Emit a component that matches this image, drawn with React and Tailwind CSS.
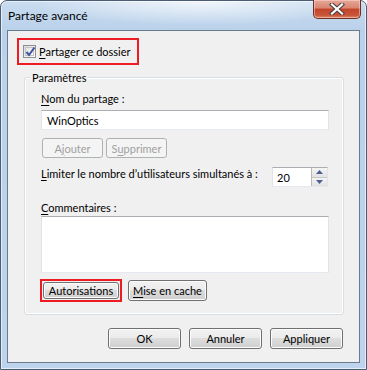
import { useState } from "react";

const btn =
  "flex items-center justify-center rounded-[3px] border border-[#707070] bg-[linear-gradient(#f2f2f2_0%,#ebebeb_45%,#dddddd_50%,#cfcfcf_100%)] shadow-[inset_0_0_0_1px_#fcfcfc] text-black";
const btnDisabled =
  "flex items-center justify-center rounded-[3px] border border-[#adb2b5] bg-[#f4f4f4] text-[#a0a0a0]";
const field = "border border-[#e2e3ea] border-t-[#abadb3] border-b-[#e3e9ef] bg-white";

function U({ children }) {
  return <span className="underline underline-offset-[2px]">{children}</span>;
}

function CheckBox({ checked, onClick }) {
  return (
    <div
      onClick={onClick}
      className="shrink-0 w-[13px] h-[13px] border border-[#8e8f8f] bg-[linear-gradient(135deg,#dcdcdc,#ffffff)] flex items-center justify-center"
    >
      <div className="relative w-[9px] h-[9px] border border-[#c3c3c3] bg-[linear-gradient(135deg,#e4e4e4,#fafafa)]">
        {checked && (
          <svg width="11" height="11" viewBox="0 0 11 11" className="absolute -left-[1px] -top-[2px]">
            <path d="M1.5 6 L4 9 L9.5 1.5" fill="none" stroke="#3a52a0" strokeWidth="2" />
          </svg>
        )}
      </div>
    </div>
  );
}

function CloseButton() {
  return (
    <div className="w-[48px] h-[19px] rounded-b-[5px] border border-t-0 border-[#6b2f25] bg-[linear-gradient(#e6a899_0%,#d98470_45%,#c3452b_50%,#c9553a_85%,#e28a6c_100%)] shadow-[inset_0_0_0_1px_rgba(255,220,210,0.5)] flex items-center justify-center">
      <svg width="16" height="12" viewBox="0 0 16 12">
        <path d="M3 1.5 L13 10.5 M13 1.5 L3 10.5" stroke="#4b3c3a" strokeWidth="4.2" strokeLinecap="square" />
        <path d="M3 1.5 L13 10.5 M13 1.5 L3 10.5" stroke="#ffffff" strokeWidth="2.2" strokeLinecap="square" />
      </svg>
    </div>
  );
}

export default function App() {
  const [shared, setShared] = useState(true);
  const [name, setName] = useState("WinOptics");
  const [limit, setLimit] = useState(20);
  const [comment, setComment] = useState("");

  return (
    <div className="w-[367px] h-[370px] font-['Segoe_UI','Lato',sans-serif] text-[11px] leading-[15px] text-black whitespace-nowrap">
      <div className="w-full h-full flex flex-col rounded-t-[7px] border border-[#4a5d75] bg-[linear-gradient(180deg,#c9dcf0_0%,#b9d1ea_8%,#bdd4ec_100%)] shadow-[inset_0_0_0_1px_rgba(255,255,255,0.6)]">
        {/* title bar */}
        <div className="h-[29px] flex items-start justify-between bg-[radial-gradient(ellipse_at_55%_0%,rgba(255,255,255,0.75),rgba(255,255,255,0)_60%)] rounded-t-[7px]">
          <div className="pl-[7px] pt-[7px] text-[12px]">Partage avancé</div>
          <div className="mr-[5px] -mt-[1px]">
            <CloseButton />
          </div>
        </div>

        {/* client area */}
        <div className="mx-[6px] h-[333px] border border-[#6a7b8e] bg-[#f0f0f0] flex flex-col">
          <div className="ml-[9px] mt-[7px] w-[122px] h-[27px] border-2 border-[#ed1c24] flex items-center pl-[4px]">
            <CheckBox checked={shared} onClick={() => setShared(!shared)} />
            <span className="ml-[3px]">
              <U>P</U>artager ce dossier
            </span>
          </div>

          {/* group box */}
          <div className="relative ml-[16px] mt-[12px] w-[320px] h-[238px] rounded-[3px] border border-[#d5dfe5] shadow-[inset_0_0_0_1px_#ffffff] flex flex-col pl-[16px]">
            <div className="absolute left-[5px] -top-[8px] px-[2px] bg-[#f0f0f0]">Paramètres</div>

            <div className="mt-[13px]">
              <U>N</U>om du partage :
            </div>
            <input
              value={name}
              onChange={(e) => setName(e.target.value)}
              className={`mt-[4px] w-[288px] h-[20px] px-[5px] outline-none ${field}`}
            />

            <div className="mt-[8px] ml-[1px] flex gap-[3px]">
              <div className={`w-[61px] h-[20px] ${btnDisabled}`}>
                <span>
                  A<U>j</U>outer
                </span>
              </div>
              <div className={`w-[61px] h-[20px] ${btnDisabled}`}>
                <span>
                  S<U>u</U>pprimer
                </span>
              </div>
            </div>

            <div className="mt-[9px] w-[287px] flex items-start justify-between">
              <div className="-mt-[1px]">
                <U>L</U>imiter le nombre d’utilisateurs simultanés à :
              </div>
              <div className={`shrink-0 w-[56px] h-[20px] flex ${field}`}>
                <input
                  value={limit}
                  onChange={(e) => setLimit(e.target.value)}
                  className="w-[38px] h-full pl-[4px] outline-none bg-white"
                />
                <div className="flex-1 flex flex-col border-l border-[#b8b8b8]">
                  <div className="flex-1 flex items-center justify-center border-b border-[#c6c6c6] bg-[linear-gradient(#f4f4f4,#e2e2e2)]">
                    <svg width="7" height="4" viewBox="0 0 7 4">
                      <path d="M0 4 L3.5 0 L7 4 Z" fill="#4d5f8f" />
                    </svg>
                  </div>
                  <div className="flex-1 flex items-center justify-center bg-[linear-gradient(#f4f4f4,#e2e2e2)]">
                    <svg width="7" height="4" viewBox="0 0 7 4">
                      <path d="M0 0 L3.5 4 L7 0 Z" fill="#4d5f8f" />
                    </svg>
                  </div>
                </div>
              </div>
            </div>

            <div className="mt-[13px]">
              <U>C</U>ommentaires :
            </div>
            <textarea
              value={comment}
              onChange={(e) => setComment(e.target.value)}
              className={`mt-[1px] w-[288px] h-[57px] resize-none outline-none ${field}`}
            />

            <div className="mt-[6px] -ml-[1px] flex items-start gap-[6px]">
              <div className="w-[82px] h-[23px] border-2 border-[#ed1c24] p-[1px]">
                <div className={`w-full h-full ${btn}`}>Autorisations</div>
              </div>
              <div className={`mt-[1px] w-[79px] h-[21px] ${btn}`}>
                <span>
                  <U>M</U>ise en cache
                </span>
              </div>
            </div>
          </div>

          {/* dialog buttons */}
          <div className="mt-[13px] ml-[100px] flex gap-[8px]">
            <div className={`w-[73px] h-[21px] ${btn}`}>OK</div>
            <div className={`w-[73px] h-[21px] ${btn}`}>Annuler</div>
            <div className={`w-[73px] h-[21px] ${btn}`}>Appliquer</div>
          </div>
        </div>
      </div>
    </div>
  );
}
